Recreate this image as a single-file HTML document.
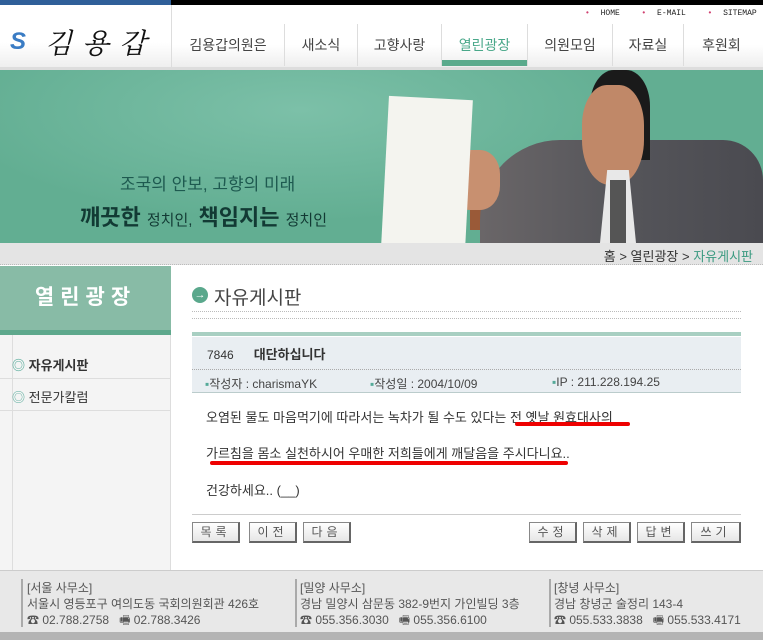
<!DOCTYPE html>
<html><head><meta charset="utf-8"><style>
*{margin:0;padding:0;box-sizing:border-box}
body{width:763px;height:640px;overflow:hidden;background:#fff;font-family:"Liberation Sans","Noto Sans CJK KR","NanumGothic",sans-serif;position:relative;color:#333}
.a{position:absolute}
.nav{top:35px;font-size:14px;color:#444;text-align:center}
.sep{top:24px;width:1px;height:42px;background:#ddd}
.btn{top:522px;height:21px;border:1px solid #888;border-right:2px solid #666;border-bottom:2px solid #666;background:linear-gradient(#fff,#e6e6e6);font-size:12px;color:#555;text-align:center;line-height:18px;letter-spacing:4px}
.f{font-size:12px;color:#555;line-height:16px}
</style></head><body>
<div class="a" style="left:0;top:0;width:171px;height:5px;background:#2f5f99"></div>
<div class="a" style="left:171px;top:0;width:592px;height:5px;background:#000"></div>
<div class="a" style="left:0;top:5px;width:171px;height:62px;background:linear-gradient(#fff 60%,#efefef)"></div>
<div class="a" style="left:171px;top:5px;width:1px;height:62px;background:#ddd"></div>
<div class="a" style="left:172px;top:45px;width:591px;height:22px;background:linear-gradient(#fff,#eee)"></div>
<div class="a" style="left:10px;top:28px;font-size:24px;color:#3a7cc4;font-style:italic;font-weight:bold">S</div>
<div class="a" style="left:45px;top:22px;font-size:28px;font-family:'Noto Serif CJK SC',serif;font-style:italic;color:#111;letter-spacing:10px">김용갑</div>
<div class="a" style="left:585px;top:9px;font-size:8px;color:#222;font-family:'Liberation Mono',monospace;word-spacing:6px"><span style="color:#d04070">•</span> HOME &nbsp;<span style="color:#d04070">•</span> E-MAIL &nbsp;<span style="color:#d04070">•</span> SITEMAP</div>
<div class="a nav" style="left:172px;width:112px">김용갑의원은</div>
<div class="a sep" style="left:284px"></div>
<div class="a nav" style="left:285px;width:72px">새소식</div>
<div class="a sep" style="left:357px"></div>
<div class="a nav" style="left:358px;width:83px">고향사랑</div>
<div class="a sep" style="left:441px"></div>
<div class="a nav" style="left:442px;width:85px;color:#4aa88a">열린광장</div>
<div class="a" style="left:442px;top:60px;width:85px;height:6px;background:#5aaa8c"></div>
<div class="a sep" style="left:527px"></div>
<div class="a nav" style="left:528px;width:84px">의원모임</div>
<div class="a sep" style="left:612px"></div>
<div class="a nav" style="left:613px;width:70px">자료실</div>
<div class="a sep" style="left:683px"></div>
<div class="a nav" style="left:684px;width:75px">후원회</div>
<div class="a" style="left:0;top:67px;width:763px;height:3px;background:#ddd"></div>
<div class="a" style="left:0;top:70px;width:763px;height:173px;background:radial-gradient(ellipse 500px 160px at 300px 40px,#7cc0a8,#62ae92 70%);overflow:hidden">
 <div class="a" style="left:470px;top:120px;width:80px;height:40px;background:#9a5a38"></div>
 <div class="a" style="left:480px;top:70px;width:283px;height:110px;background:linear-gradient(90deg,#6a6668,#55555a 50%,#4a4a50);border-radius:80px 40px 0 0"></div>
 <div class="a" style="left:590px;top:0;width:60px;height:90px;background:#1a1a1a;border-radius:40% 40% 0 0"></div>
 <div class="a" style="left:582px;top:15px;width:62px;height:100px;background:#c08868;border-radius:40% 40% 45% 45%"></div>
 <div class="a" style="left:600px;top:100px;width:36px;height:73px;background:#e8e8e8;clip-path:polygon(20% 0,80% 0,100% 100%,0 100%)"></div>
 <div class="a" style="left:610px;top:110px;width:16px;height:63px;background:#555"></div>
 <div class="a" style="left:450px;top:80px;width:50px;height:60px;background:#c89070;border-radius:40%"></div>
 <div class="a" style="left:385px;top:28px;width:84px;height:150px;background:#f4f4ef;transform:rotate(3deg)"></div>
 <div class="a" style="left:120px;top:100px;font-size:17px;color:#1e5a50">조국의 안보, 고향의 미래</div>
 <div class="a" style="left:80px;top:130px;font-size:22px;color:#123a34;font-weight:bold;white-space:nowrap">깨끗한 <span style="font-size:15px;font-weight:normal">정치인,</span> 책임지는 <span style="font-size:15px;font-weight:normal">정치인</span></div>
</div>
<div class="a" style="left:0;top:243px;width:763px;height:22px;background:#e4e4e4;border-bottom:1px dotted #bbb"></div>
<div class="a" style="right:10px;top:246px;font-size:13px;color:#333">홈 &gt; 열린광장 &gt; <span style="color:#3a9a80">자유게시판</span></div>
<div class="a" style="left:0;top:266px;width:171px;height:304px;background:#f4f4f4;border-right:1px solid #ddd"></div>
<div class="a" style="left:12px;top:335px;width:1px;height:235px;background:#ddd"></div>
<div class="a" style="left:0;top:266px;width:171px;height:64px;background:#88bba6;color:#fff;font-size:21px;font-weight:bold;text-align:center;line-height:64px;letter-spacing:6px">열린광장</div>
<div class="a" style="left:0;top:330px;width:171px;height:5px;background:#5ea88c"></div>
<div class="a" style="left:12px;top:355px;font-size:13px;font-weight:bold;color:#333"><span style="color:#5a9">◎</span> 자유게시판</div>
<div class="a" style="left:0;top:378px;width:171px;height:1px;background:#ddd"></div>
<div class="a" style="left:12px;top:387px;font-size:13px;color:#333"><span style="color:#5a9">◎</span> 전문가칼럼</div>
<div class="a" style="left:0;top:410px;width:171px;height:1px;background:#ddd"></div>
<div class="a" style="left:192px;top:287px;width:16px;height:16px;border-radius:50%;background:#5aa88c;color:#fff;font-size:11px;text-align:center;line-height:16px">→</div>
<div class="a" style="left:214px;top:283px;font-size:19px;color:#444">자유게시판</div>
<div class="a" style="left:192px;top:311px;width:549px;height:8px;border-top:1px dotted #bbb;border-bottom:1px dotted #bbb"></div>
<div class="a" style="left:192px;top:332px;width:549px;height:4px;background:#a8cfc2"></div>
<div class="a" style="left:192px;top:337px;width:549px;height:56px;background:#e9eef2;border-bottom:1px solid #bcc"></div>
<div class="a" style="left:192px;top:369px;width:549px;height:1px;border-top:1px dotted #aaa"></div>
<div class="a" style="left:207px;top:344px;font-size:12px;color:#333">7846 &nbsp;&nbsp;&nbsp;&nbsp; <b style="font-size:13px">대단하십니다</b></div>
<div class="a" style="left:205px;top:375px;font-size:12px;color:#444"><span style="color:#5a9">▪</span>작성자 : charismaYK</div>
<div class="a" style="left:370px;top:375px;font-size:12px;color:#444"><span style="color:#5a9">▪</span>작성일 : 2004/10/09</div>
<div class="a" style="left:552px;top:375px;font-size:12px;color:#444"><span style="color:#5a9">▪</span>IP : 211.228.194.25</div>
<div class="a" style="left:206px;top:407px;font-size:13px;color:#333;white-space:nowrap">오염된 물도 마음먹기에 따라서는 녹차가 될 수도 있다는 전 옛날 원효대사의</div>
<div class="a" style="left:515px;top:422px;width:115px;height:4px;background:#e00;border-radius:2px"></div>
<div class="a" style="left:206px;top:443px;font-size:13px;color:#333;white-space:nowrap">가르침을 몸소 실천하시어 우매한 저희들에게 깨달음을 주시다니요..</div>
<div class="a" style="left:210px;top:461px;width:358px;height:4px;background:#e00;border-radius:2px"></div>
<div class="a" style="left:206px;top:480px;font-size:13px;color:#333">건강하세요.. (__)</div>
<div class="a" style="left:192px;top:514px;width:549px;height:1px;background:#ccc"></div>
<div class="a btn" style="left:192px;width:48px">목록</div>
<div class="a btn" style="left:249px;width:48px">이전</div>
<div class="a btn" style="left:303px;width:48px">다음</div>
<div class="a btn" style="left:529px;width:48px">수정</div>
<div class="a btn" style="left:583px;width:48px">삭제</div>
<div class="a btn" style="left:637px;width:48px">답변</div>
<div class="a btn" style="left:691px;width:50px">쓰기</div>
<div class="a" style="left:0;top:570px;width:763px;height:62px;background:#e8e8e8;border-top:1px solid #ccc"></div>
<div class="a" style="left:0;top:632px;width:763px;height:8px;background:#b4b4b4"></div>
<div class="a" style="left:21px;top:579px;width:2px;height:48px;background:#aaa"></div>
<div class="a" style="left:295px;top:579px;width:2px;height:48px;background:#aaa"></div>
<div class="a" style="left:549px;top:579px;width:2px;height:48px;background:#aaa"></div>
<div class="a f" style="left:27px;top:580px;white-space:nowrap">[서울 사무소]<br>서울시 영등포구 여의도동 국회의원회관 426호<br>☎ 02.788.2758 &nbsp;&nbsp;🖷 02.788.3426</div>
<div class="a f" style="left:300px;top:580px;white-space:nowrap">[밀양 사무소]<br>경남 밀양시 삼문동 382-9번지 가인빌딩 3층<br>☎ 055.356.3030 &nbsp;&nbsp;🖷 055.356.6100</div>
<div class="a f" style="left:554px;top:580px;white-space:nowrap">[창녕 사무소]<br>경남 창녕군 술정리 143-4<br>☎ 055.533.3838 &nbsp;&nbsp;🖷 055.533.4171</div>
</body></html>
